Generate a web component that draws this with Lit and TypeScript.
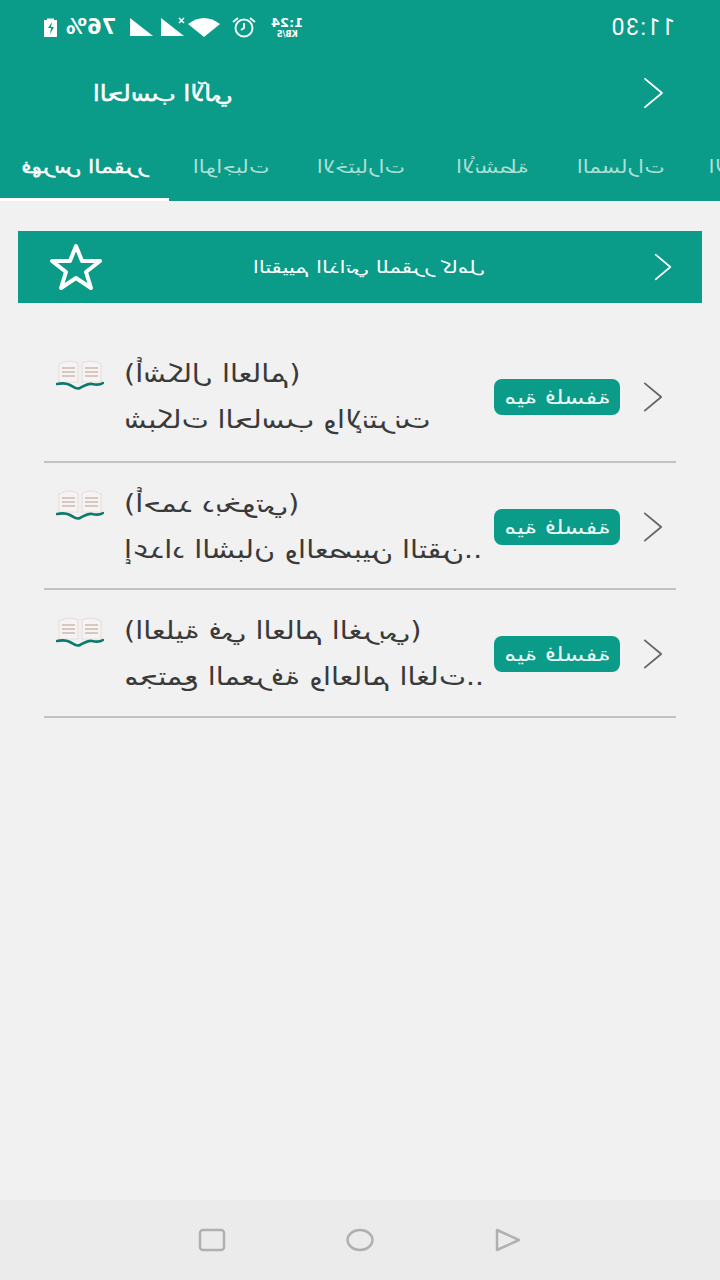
import { LitElement, html, css, svg } from "lit";
import { customElement } from "lit/decorators.js";

const chevron = (cls: string) => html`<svg class=${cls} viewBox="0 0 22 34" fill="none" stroke="currentColor" stroke-width="2" stroke-linecap="round" stroke-linejoin="round"><path d="M2 2 L20 17 L2 32"/></svg>`;

const book = html`<svg class="book" viewBox="0 0 48 32" fill="none">
  <path d="M3 5 Q12 0 22 4 V23 H3z M26 4 Q36 0 45 5 V23 H26z" fill="#f6f3f2" stroke="#e6e1df" stroke-width="1.2"/>
  <g stroke="#d6c7c2" stroke-width="1.8"><path d="M6 9h13M6 13h13M6 17h13M29 9h13M29 13h13M29 17h13"/></g>
  <path d="M1 25 C6 24 10 24 14 26 S20 31 24 29 S32 24 36 25 S44 26 47 24" stroke="#0b7a6a" stroke-width="2.6" stroke-linecap="round"/>
</svg>`;

const rows = [
  { a: "(أشكال العالم)", b: "شبكات الحاسب والإنترنت" },
  { a: "(أحمد دبخوتي)", b: "إعداد الشبان والعصبين التقن.." },
  { a: "(العلية في العالم الغربي)", b: "مجتمع المعرفة والعالم الغات.." },
];
const tabs = ["فهرس المقرر", "الواجبات", "الاختبارات", "الأنشطة", "المسارات", "الإعلانات"];
const tabWidths = [169, 124, 136, 127, 130, 122];

@customElement("app-root")
export class AppRoot extends LitElement {
  static styles = css`
    :host { display: block; width: 720px; height: 1280px; background: #f1f1f1; font-family: "DejaVu Sans", "Noto Sans", sans-serif; overflow: hidden; }
    .page { display: flex; flex-direction: column; height: 1280px; }
    .m { display: inline-block; transform: scaleX(-1); white-space: nowrap; }
    /* mirrored and stretched, keeping its left edge where the flow put it */
    .grow { transform-origin: 100% 50%; transform: translateX(-100%) scaleX(-1.15); }
    header { background: #0a9b89; color: #fff; height: 201px; flex: none; display: flex; flex-direction: column; }
    .status { height: 52px; display: flex; align-items: center; padding: 2px 45px 0 43px; box-sizing: border-box; flex: none; }
    .status svg { flex: none; display: block; }
    .pct { font-size: 21px; font-weight: 700; margin: 0 14px 0 8px; line-height: 1; }
    .speed { display: flex; flex-direction: column; align-items: center; margin-left: 14px; line-height: 1; }
    .speed .t { font-size: 13px; font-weight: 700; }
    .speed .u { font-size: 8px; font-weight: 700; margin-top: 2px; }
    .clock { margin-left: auto; font-size: 23px; font-family: "Roboto", sans-serif; letter-spacing: 1.5px; line-height: 1; }
    .title { height: 82px; display: flex; align-items: center; padding: 0 56px 0 93px; flex: none; justify-content: space-between; }
    .title .m { font-size: 22px; -webkit-text-stroke: 0.5px #fff; transform: translateX(-100%) scaleX(-1.12); transform-origin: 100% 50%; }
    .chev-w { width: 21px; height: 32px; }
    .tabs { flex: 1; display: flex; overflow: hidden; align-items: stretch; }
    .tab { flex: none; box-sizing: border-box; display: flex; align-items: center; justify-content: center; color: #aadfd5; font-size: 18px; height: 67px; padding-bottom: 2px; }
    .tab .m { transform: scaleX(-1.2); }
    .tab.on { color: #fff; border-bottom: 3px solid #fff; padding-bottom: 0; -webkit-text-stroke: 0.4px #fff; }
    .tab.on .m { transform: scaleX(-1.23); }
    main { flex: 1; padding: 30px 18px 0; }
    .banner { height: 72px; background: #0a9b89; color: #fff; display: flex; align-items: center; padding: 0 30px; }
    .banner .star { width: 56px; height: 48px; flex: none; }
    .banner .lbl { flex: 1; display: flex; justify-content: center; padding-right: 21px; box-sizing: border-box; font-size: 17px; }
    .banner .m { transform: scaleX(-1.25); }
    .banner .chev { width: 18px; height: 28px; flex: none; }
    .list { margin: 32px 26px 0; }
    .row { height: 127.5px; box-sizing: border-box; border-bottom: 2px solid #c2c2c2; display: flex; padding-left: 12px; }
    .row:nth-child(n + 2) { padding-top: 2px; }
    .book { width: 48px; height: 32px; flex: none; margin-top: 24px; }
    .txt { width: 370px; margin-left: 20px; flex: none; color: #3a3a3a; }
    .l1 { font-size: 25px; margin-top: 22px; line-height: 34px; display: block; width: max-content; }
    .l2 { font-size: 25px; line-height: 34px; margin-top: 12px; width: 320px; direction: rtl; white-space: nowrap; }
    .badge { width: 126px; height: 36px; margin-top: 44px; background: #0a9b89; color: #e8f7f4; border-radius: 8px; flex: none; display: flex; align-items: center; justify-content: center; font-size: 20px; }
    .badge .m { transform: scaleX(-1.2); }
    .row .chev { width: 20px; height: 32px; flex: none; margin: 46px 0 0 23px; color: #666; }
    nav { height: 80px; background: #ebebeb; flex: none; display: flex; align-items: center; justify-content: center; gap: 120px; }
    nav svg { width: 28px; height: 24px; color: #b0b0b0; }
  `;

  render() {
    return html`<div class="page">
      <header>
        <div class="status">
          ${svg`<svg width="15" height="20" viewBox="0 0 15 20"><path d="M4 1.5h7V3h3v17H1V3h3z" fill="#fff"/><path d="M9 5 L5 11h3l-1 6 4-7H8z" fill="#0a9b89"/></svg>`}
          <span class="m pct">76%</span>
          <svg width="23" height="20" viewBox="0 0 23 20"><path d="M0 1 L23 19 H0z" fill="#fff"/></svg>
          <svg style="margin-left:8px" width="25" height="20" viewBox="0 0 25 20"><path d="M0 1 L23 19 H0z" fill="#fff"/><path d="M18 1l5 5M23 1l-5 5" stroke="#fff" stroke-width="1.5"/></svg>
          <svg style="margin-left:2px" width="34" height="20" viewBox="0 0 34 20"><path d="M0 7 Q16 -5 32 7 L16 20z" fill="#fff"/></svg>
          <svg style="margin-left:9px" width="26" height="22" viewBox="0 0 26 22" fill="none" stroke="#e9f7f5" stroke-width="2"><circle cx="13" cy="12" r="8.5"/><path d="M13 7v5l-3 2M2 6l5-4M24 6l-5-4"/></svg>
          <div class="speed m"><span class="t">1:24</span><span class="u">KB/S</span></div>
          <span class="m clock">11:30</span>
        </div>
        <div class="title"><span class="m">الحاسب الآلي</span>${chevron("chev-w")}</div>
        <div class="tabs">
          ${tabs.map((t, i) => html`<div class="tab ${i === 0 ? "on" : ""}" style="width:${tabWidths[i]}px"><span class="m">${t}</span></div>`)}
        </div>
      </header>
      <main>
        <div class="banner">
          <svg class="star" viewBox="0 0 56 48" fill="none" stroke="#fff" stroke-width="4" stroke-linejoin="round"><path d="M28 3 L34 18 L52 18 L38 29 L43 45 L28 35 L13 45 L18 29 L4 18 L22 18 Z"/></svg>
          <div class="lbl"><span class="m">التقييم الذاتي للمقرر كامل</span></div>
          ${chevron("chev")}
        </div>
        <div class="list">
          ${rows.map(r => html`<div class="row">
            ${book}
            <div class="txt"><span class="m grow l1">${r.a}</span><div class="m grow l2">${r.b}</div></div>
            <div class="badge"><span class="m">مية فلسفة</span></div>
            ${chevron("chev")}
          </div>`)}
        </div>
      </main>
      <nav>
        <svg viewBox="0 0 28 24" fill="none" stroke="currentColor" stroke-width="2.5"><rect x="2" y="2" width="24" height="20" rx="3"/></svg>
        <svg viewBox="0 0 28 24" fill="none" stroke="currentColor" stroke-width="2.5"><ellipse cx="14" cy="12" rx="12.5" ry="10"/></svg>
        <svg viewBox="0 0 28 24" fill="none" stroke="currentColor" stroke-width="2.5" stroke-linejoin="round"><path d="M3 2 L25 12 L3 22 Z"/></svg>
      </nav>
    </div>`;
  }
}
